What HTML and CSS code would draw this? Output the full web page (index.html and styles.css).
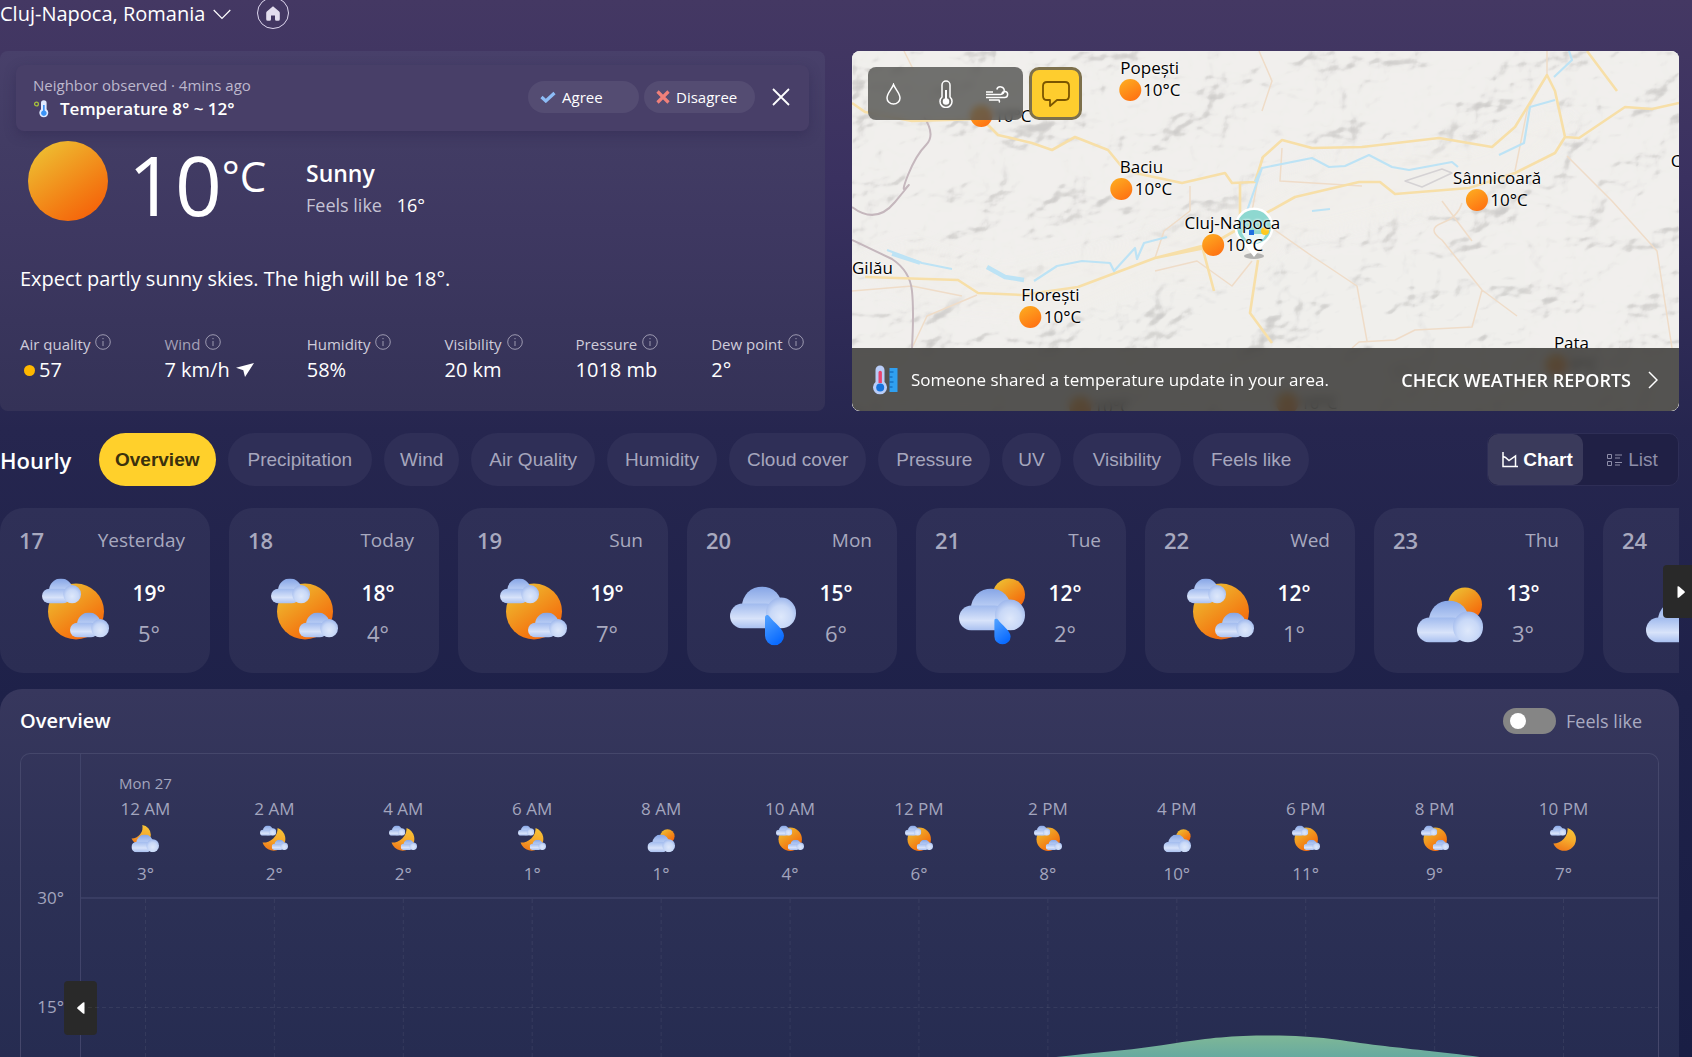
FILE: index.html
```html
<!DOCTYPE html>
<html lang="en">
<head>
<meta charset="utf-8">
<meta name="viewport" content="width=device-width, initial-scale=1">
<title>Weather in Cluj-Napoca, Romania</title>
<link rel="stylesheet" href="styles.css">
</head>
<body>
<svg class="sprite" aria-hidden="true">
  <defs>
    <linearGradient id="g-sun" x1="0.15" y1="0.1" x2="0.75" y2="0.95"><stop offset="0" stop-color="#eebb30"/><stop offset="0.7" stop-color="#f37e14"/><stop offset="1" stop-color="#f5650b"/></linearGradient>
    <linearGradient id="g-moon" x1="0.7" y1="0" x2="0.4" y2="1"><stop offset="0" stop-color="#f7c437"/><stop offset="0.5" stop-color="#f6ab2c"/><stop offset="1" stop-color="#f07a1a"/></linearGradient>
    <linearGradient id="g-top" x1="0" y1="0" x2="0" y2="1"><stop offset="0" stop-color="#86a5e6"/><stop offset="0.45" stop-color="#b9cdf4"/><stop offset="1" stop-color="#dbe5fa"/></linearGradient>
    <linearGradient id="g-left" x1="0" y1="0" x2="0" y2="1"><stop offset="0" stop-color="#a0baee"/><stop offset="0.6" stop-color="#d8e3fa"/><stop offset="1" stop-color="#a9c0f0"/></linearGradient>
    <radialGradient id="g-right" cx="0.5" cy="0.62" r="0.66"><stop offset="0" stop-color="#dee8fb"/><stop offset="0.55" stop-color="#c8d8f7"/><stop offset="1" stop-color="#96b1ea"/></radialGradient>
    <linearGradient id="g-drop" x1="0" y1="0" x2="0.5" y2="1"><stop offset="0" stop-color="#55a4ff"/><stop offset="1" stop-color="#0a6bff"/></linearGradient>
  </defs>
  <symbol id="cloud" viewBox="0 0 66 42">
    <circle cx="32" cy="20" r="20" fill="url(#g-top)"/>
    <rect x="0" y="17" width="48" height="25" rx="12.5" fill="url(#g-left)"/>
    <rect x="36" y="11" width="30" height="31" rx="15" fill="url(#g-right)"/>
  </symbol>
  <symbol id="drop" viewBox="0 0 20 32"><path d="M0 3 C0 -0.500 3 -0.500 4.500 1.500 C9 8 20 15 20 22 A10 10 0 0 1 0 22 Z" fill="url(#g-drop)"/></symbol>
  <symbol id="partly" viewBox="0 0 67 67">
    <circle cx="34" cy="34" r="28" fill="url(#g-sun)"/>
    <use href="#cloud" x="0" y="1" width="39" height="25"/><use href="#cloud" x="28" y="35" width="39" height="25"/>
  </symbol>
  <symbol id="rain" viewBox="0 0 67 67"><use href="#cloud" x="1" y="9" width="66" height="42"/><use href="#drop" x="36" y="37" width="19" height="31"/></symbol>
  <symbol id="sunrain" viewBox="0 0 67 67"><circle cx="51" cy="17" r="16" fill="url(#g-sun)"/><use href="#cloud" x="1" y="11" width="66" height="42"/><use href="#drop" x="36" y="41" width="17" height="26"/></symbol>
  <symbol id="cloudy" viewBox="0 0 67 67"><circle cx="49" cy="27" r="17" fill="url(#g-sun)"/><use href="#cloud" x="1" y="23" width="66" height="42"/></symbol>
  <symbol id="nightcloudy" viewBox="0 0 67 67"><path d="M27 0 A24 24 0 1 1 1 32 A26 26 0 0 0 27 0Z" fill="url(#g-moon)"/><use href="#cloud" x="1" y="23" width="66" height="42"/></symbol>
  <symbol id="night" viewBox="0 0 67 67"><path d="M42 7 A28 28 0 1 1 6 42 A34 34 0 0 0 42 7Z" fill="url(#g-moon)"/><use href="#cloud" x="0" y="1" width="39" height="25"/><use href="#cloud" x="28" y="35" width="39" height="25"/></symbol>
  <symbol id="nightclear" viewBox="0 0 67 67"><path d="M42 7 A28 28 0 1 1 8 44 A34 34 0 0 0 42 7Z" fill="url(#g-moon)"/><use href="#cloud" x="0" y="1" width="39" height="25"/></symbol>
  <symbol id="info" viewBox="0 0 16 16"><circle cx="8" cy="8" r="7.300" fill="none" stroke="currentColor"/><path d="M8 7v5M8 4v1.200" stroke="currentColor" fill="none"/></symbol>
</svg>

<main class="page">
  <header class="location">
    <button class="place" type="button">Cluj-Napoca, Romania
      <svg width="18" height="11" viewBox="0 0 18 11"><path d="M.7 1 9 9.500 17.300 1" fill="none" stroke="currentColor" stroke-width="1.200"/></svg>
    </button>
    <button class="home" type="button" aria-label="Set as home">
      <svg width="14" height="15" viewBox="0 0 14 15"><path d="M7 .3 13.200 5.600Q13.800 6.200 13.800 7V13.200Q13.800 14.700 12.300 14.700H10.400Q9 14.700 9 13.200V9.500H5V13.200Q5 14.700 3.600 14.700H1.700Q.2 14.700.2 13.200V7Q.2 6.200.8 5.600Z" fill="#e3deee"/></svg>
    </button>
  </header>

  <div class="top">
    <section class="current">
      <div class="notice">
        <div class="notice-text">
          <p class="muted">Neighbor observed · 4mins ago</p>
          <p class="observed"><svg width="17" height="18" viewBox="0 0 17 18"><circle cx="3.500" cy="4" r="1.900" fill="none" stroke="#a8c23c" stroke-width="1.300"/><path d="M8 3a2.800 2.800 0 0 1 5.600 0V9.300a4.500 4.500 0 1 1-5.600 0Z" fill="#dfeaff"/><path d="M10 5h1.700v5.500a2.800 2.800 0 1 1-1.700 0Z" fill="#3b93f5"/></svg>Temperature 8° ~ 12°</p>
        </div>
        <button class="vote" type="button"><svg width="16" height="12" viewBox="0 0 16 12"><path d="M1.500 6 5.800 10 14.500 2" fill="none" stroke="#8dbcf6" stroke-width="3.200"/></svg>Agree</button>
        <button class="vote" type="button"><svg width="14" height="14" viewBox="0 0 14 14"><path d="M1.500 1.500 12.500 12.500M12.500 1.500 1.500 12.500" fill="none" stroke="#f0807a" stroke-width="3.200"/></svg>Disagree</button>
        <button class="close" type="button" aria-label="Close"><svg width="18" height="18" viewBox="0 0 18 18"><path d="M1 1 17 17M17 1 1 17" fill="none" stroke="#fff" stroke-width="1.800"/></svg></button>
      </div>
      <div class="now">
        <svg class="sun" viewBox="0 0 80 80"><circle cx="40" cy="40" r="40" fill="url(#g-sun)"/></svg>
        <p class="degrees">10<span class="unit">°C</span></p>
        <div class="sky"><p class="sky-name">Sunny</p><p class="feels"><span>Feels like</span> 16°</p></div>
      </div>
      <p class="summary">Expect partly sunny skies. The high will be 18°.</p>
      <dl class="metrics">
        <div><dt>Air quality <svg><use href="#info"/></svg></dt><dd><i class="aqi-dot"></i>57</dd></div>
        <div><dt class="dim">Wind <svg><use href="#info"/></svg></dt><dd>7 km/h <svg class="wind-arrow" viewBox="0 0 18 14"><path d="M18 0 0 4.800 7.300 7.200 9 14Z" fill="#fff"/></svg></dd></div>
        <div><dt>Humidity <svg><use href="#info"/></svg></dt><dd>58%</dd></div>
        <div><dt>Visibility <svg><use href="#info"/></svg></dt><dd>20 km</dd></div>
        <div><dt>Pressure <svg><use href="#info"/></svg></dt><dd>1018 mb</dd></div>
        <div><dt>Dew point <svg><use href="#info"/></svg></dt><dd>2°</dd></div>
      </dl>
    </section>

    <section class="map" aria-label="Weather map">
      <svg class="terrain" viewBox="0 0 827 360" preserveAspectRatio="none" aria-hidden="true">
        <defs>
          <filter id="relief" x="0" y="0" width="1" height="1" color-interpolation-filters="sRGB">
            <feTurbulence type="fractalNoise" baseFrequency="0.014 0.018" numOctaves="4" seed="11"/>
            <feDiffuseLighting surfaceScale="18" diffuseConstant="1.100" lighting-color="#fff"><feDistantLight azimuth="225" elevation="62"/></feDiffuseLighting>
            <feComponentTransfer><feFuncR type="table" tableValues="0.700 0.710 0.730 0.800 0.910 0.945 0.950"/><feFuncG type="table" tableValues="0.700 0.710 0.725 0.795 0.907 0.942 0.946"/><feFuncB type="table" tableValues="0.700 0.705 0.720 0.785 0.900 0.930 0.935"/></feComponentTransfer>
            <feGaussianBlur stdDeviation="0.7"/>
          </filter>
          <filter id="soft"><feGaussianBlur stdDeviation="9"/></filter>
        </defs>
        <rect width="827" height="360" fill="#efeeeb"/>
        <rect width="827" height="360" filter="url(#relief)" opacity=".6"/>
        <path d="M0 215 60 195 150 225 230 205 290 190 380 155 480 105 620 95 700 60 725 75 640 145 540 165 430 190 400 225 300 230 220 265 60 250Z" fill="#f1efeb" opacity=".9" filter="url(#soft)"/>
        <g fill="none" stroke-linejoin="round">
          <g stroke="#efdcc8" stroke-width="1.500">
            <path d="M610 152Q606 166 590 172T590 189L630 239 665 265M630 239 620 276 563 279 543 289 507 291 500 297M410 170 460 205 505 235 515 290M663 120 675 60 695 24V0M338 135V160M303 207 312 180 338 160M400 210 380 235 345 210 303 220M0 240 60 235 110 245M60 297 75 265 125 244M410 60 420 30 407 0M410 106 400 160M430 97 428 130 510 135M590 150 620 190M715 105 760 150 805 200 820 297M52 0 62 20" />
            <path d="M553 130 590 118 600 122 570 136Z" stroke="#d5d2d4"/>
          </g>
          <g stroke="#c5b7bd" stroke-width="2">
            <path d="M72 66Q84 84 74 94T56 124 55 136 43 151 0 156M0 189 40 208Q58 220 60 240T60 297"/>
          </g>
          <g stroke="#f7dfa8" stroke-width="2.600">
            <path d="M0 52 13 61 60 70 130 68 146 84 180 92 200 99 223 86 256 99 270 116 283 122 330 132 373 122 380 132 403 131 411 106 430 89 460 97 510 96 587 87 640 96 663 76 695 24 703 40 713 86M388 132V165M13 226 106 229 126 242 170 244 226 236 303 207 353 197 400 170 443 146 507 131 528 131 543 143 617 137 663 122 703 102 713 86 727 87 773 56 800 58 827 52M406 209 398 262 420 292M303 207 350 195 362 240M735 0 765 40"/>
          </g>
          <g stroke="#bde3f5" stroke-width="2.200">
            <path d="M35 199 70 212 100 218M182 230 205 215 230 210 258 212 262 220 283 197 285 208 292 192 315 186M395 160 410 117 460 107 477 116 493 115 517 104 540 116 557 119 600 111 606 116M403 131 410 117M647 104 672 92 678 56 703 49M702 26 720 9 717 0M460 160 478 158"/>
            <path d="M135 216 153 226 172 229" stroke-width="4.500"/><path d="M40 203 68 212" stroke-width="3.500"/>
          </g>
        </g>
      </svg>

      <svg class="pin" viewBox="0 0 44 54"><ellipse cx="22" cy="50" rx="10" ry="3" fill="#777" opacity=".5"/><path d="M22 51 11 37A19.500 19.500 0 1 1 33 37Z" fill="#fff"/><circle cx="22" cy="21" r="17" fill="#8ed8d0"/><path d="M10 27q6-7 12 1h12q-4 9-12 10-8-2-12-11Z" fill="#e9f6f5"/><rect x="17" y="24" width="5" height="5" fill="#1e6fe0"/><circle cx="33" cy="25" r="4" fill="#ffc91f"/></svg>

      <div class="town popesti">Popești<span><i></i>10°C</span></div>
      <div class="town baciu">Baciu<span><i></i>10°C</span></div>
      <div class="town cluj">Cluj-Napoca<span><i></i>10°C</span></div>
      <div class="town floresti">Florești<span><i></i>10°C</span></div>
      <div class="town sannicoara">Sânnicoară<span><i></i>10°C</span></div>
      <div class="town pata">Pata<span><i></i>9°C</span></div>
      <div class="town gilau">Gilău</div>
      <div class="town east">C</div>
      <div class="town covered"><span><i></i>10°C</span></div>
      <div class="town south"><span><i></i>10°C</span></div>
      <div class="town southwest"><span><i></i>10°C</span></div>

      <div class="map-tools">
        <div class="layers">
          <button type="button" aria-label="Precipitation"><svg width="15" height="22" viewBox="0 0 15 22"><path d="M7.500 1.500C6 6 1 10 1 15a6.500 6 0 0 0 13 0C14 10 9 6 7.500 1.500Z"/></svg></button>
          <button type="button" aria-label="Temperature"><svg width="14" height="28" viewBox="0 0 14 28"><path d="M3 5a4 4 0 0 1 8 0V17a6 6 0 1 1-8 0Z"/><path d="M7 10v10" stroke-width="2"/><circle cx="7" cy="21.500" r="2.500" fill="#fff"/></svg></button>
          <button type="button" aria-label="Wind"><svg width="23" height="18" viewBox="0 0 23 18"><path d="M0 9.500H14.500A3.800 3.800 0 1 0 10.800 4.500M0 12.500H18.500A3 3 0 1 0 15.800 8.500M3 15H13A2 2 0 0 1 13 17.500" /><path d="M0 7H7"/></svg></button>
        </div>
        <button class="report" type="button" aria-label="Report weather"><svg width="28" height="26" viewBox="0 0 28 26"><path d="M5 1H23Q27 1 27 5V15Q27 19 23 19H15L8 25V19H5Q1 19 1 15V5Q1 1 5 1Z" fill="none" stroke="#7a5500" stroke-width="1.800" stroke-linejoin="round"/></svg></button>
      </div>

      <a class="banner" href="#reports">
        <svg width="25" height="30" viewBox="0 0 25 30"><path d="M2.500 5a4.500 4.500 0 0 1 9 0V17a7 7 0 1 1-9 0Z" fill="#b9cdf8"/><path d="M5.500 7.500a1.700 1.700 0 0 1 3.400 0V18H5.500Z" fill="#e8436e"/><circle cx="7.200" cy="22.500" r="4" fill="#1673dc"/><path d="M16.500 3H24.500V27H16.500Z" fill="#2f9ff0"/><path d="M16.500 7h4M16.500 12h3M16.500 17h4M16.500 22h3" stroke="#0b5cb0"/></svg>
        <span class="banner-text">Someone shared a temperature update in your area.</span>
        <strong>CHECK WEATHER REPORTS</strong>
        <svg width="10" height="18" viewBox="0 0 10 18"><path d="M1 1 9 9 1 17" fill="none" stroke="#fff" stroke-width="1.500"/></svg>
      </a>
    </section>
  </div>

  <nav class="tabs">
    <h2>Hourly</h2>
    <button class="tab narrow active" type="button">Overview</button>
    <button class="tab wide" type="button">Precipitation</button>
    <button class="tab narrow" type="button">Wind</button>
    <button class="tab" type="button">Air Quality</button>
    <button class="tab" type="button">Humidity</button>
    <button class="tab" type="button">Cloud cover</button>
    <button class="tab" type="button">Pressure</button>
    <button class="tab narrow" type="button">UV</button>
    <button class="tab wide" type="button">Visibility</button>
    <button class="tab" type="button">Feels like</button>
    <div class="view">
      <button class="selected" type="button"><svg width="16" height="16" viewBox="0 0 16 16"><path d="M1 0V14.500H16M1 4.500 3.500 5.500 7 8.500 13.500 4V14.500" fill="none" stroke="currentColor" stroke-width="1.500"/></svg>Chart</button>
      <button type="button"><svg width="16" height="14" viewBox="0 0 16 14"><path d="M.5 1.500H4.500V5.500H.5ZM.5 8.500H4.500V12.500H.5ZM8 2H15M8 5H13M8 9.500H15M8 12H13" fill="none" stroke="currentColor"/></svg>List</button>
    </div>
  </nav>

  <div class="days-wrap">
    <ol class="days">
      <li><p><b>17</b><span>Yesterday</span></p><div><svg><use href="#partly"/></svg><p><b>19°</b><span>5°</span></p></div></li>
      <li><p><b>18</b><span>Today</span></p><div><svg><use href="#partly"/></svg><p><b>18°</b><span>4°</span></p></div></li>
      <li><p><b>19</b><span>Sun</span></p><div><svg><use href="#partly"/></svg><p><b>19°</b><span>7°</span></p></div></li>
      <li><p><b>20</b><span>Mon</span></p><div><svg><use href="#rain"/></svg><p><b>15°</b><span>6°</span></p></div></li>
      <li><p><b>21</b><span>Tue</span></p><div><svg><use href="#sunrain"/></svg><p><b>12°</b><span>2°</span></p></div></li>
      <li><p><b>22</b><span>Wed</span></p><div><svg><use href="#partly"/></svg><p><b>12°</b><span>1°</span></p></div></li>
      <li><p><b>23</b><span>Thu</span></p><div><svg><use href="#cloudy"/></svg><p><b>13°</b><span>3°</span></p></div></li>
      <li><p><b>24</b></p><div><svg><use href="#cloudy"/></svg></div></li>
    </ol>
    <button class="scroll next" type="button" aria-label="Next days"><svg width="8" height="12" viewBox="0 0 8 12"><path d="M.5.5Q1 0 2 .6L7.500 5.200Q8.200 6 7.500 6.800L2 11.400Q1 12 .5 11.500Z" fill="#fff"/></svg></button>
  </div>

  <section class="panel">
    <div class="panel-head">
      <h3>Overview</h3>
      <label><input type="checkbox">Feels like</label>
    </div>
    <div class="chart">
      <div class="axis"><span>30°</span><span>15°</span></div>
      <button class="scroll prev" type="button" aria-label="Earlier hours"><svg width="8" height="12" viewBox="0 0 8 12"><path d="M7.500.5Q7 0 6 .6L.5 5.200Q-.2 6 .5 6.800L6 11.400Q7 12 7.500 11.500Z" fill="#fff"/></svg></button>
      <div class="series">
        <ol class="hours">
          <li><small>Mon 27</small><span>12 AM</span><svg><use href="#nightcloudy"/></svg><span>3°</span></li>
          <li><span>2 AM</span><svg><use href="#night"/></svg><span>2°</span></li>
          <li><span>4 AM</span><svg><use href="#night"/></svg><span>2°</span></li>
          <li><span>6 AM</span><svg><use href="#night"/></svg><span>1°</span></li>
          <li><span>8 AM</span><svg><use href="#cloudy"/></svg><span>1°</span></li>
          <li><span>10 AM</span><svg><use href="#partly"/></svg><span>4°</span></li>
          <li><span>12 PM</span><svg><use href="#partly"/></svg><span>6°</span></li>
          <li><span>2 PM</span><svg><use href="#partly"/></svg><span>8°</span></li>
          <li><span>4 PM</span><svg><use href="#cloudy"/></svg><span>10°</span></li>
          <li><span>6 PM</span><svg><use href="#partly"/></svg><span>11°</span></li>
          <li><span>8 PM</span><svg><use href="#partly"/></svg><span>9°</span></li>
          <li><span>10 PM</span><svg><use href="#nightclear"/></svg><span>7°</span></li>
        </ol>
        <div class="plot">
          <svg viewBox="0 0 1578 218" preserveAspectRatio="none" aria-hidden="true">
            <defs><linearGradient id="g-area" gradientUnits="userSpaceOnUse" x1="0" y1="134" x2="0" y2="218"><stop offset="0" stop-color="#81b996"/><stop offset="0.300" stop-color="#66a9a0"/><stop offset="1" stop-color="#4a86ad"/></linearGradient></defs>
            <g stroke="#fff" stroke-opacity=".07" stroke-dasharray="4 3"><path d="M0 108.500H1578M64.500 0V218M193.500 0V218M322.500 0V218M451.500 0V218M580.500 0V218M709.500 0V218M838.500 0V218M967.500 0V218M1096.500 0V218M1225.500 0V218M1354.500 0V218M1483.500 0V218" fill="none"/></g>
            <path d="M64 196C110 202 150 204 193 204S280 204 322 204 410 211 451 211 540 213 580 211 670 197 709 189 800 180 838 174 925 164 967 159 1055 151 1096 144C1130 139 1150 136.500 1190 136.500C1240 136.500 1262 142 1300 146.500C1345 152 1440 160 1483 174L1578 190V218H64Z" fill="url(#g-area)"/>
          </svg>
        </div>
      </div>
    </div>
  </section>
</main>
</body>
</html>
```
FILE: styles.css
```css
* { box-sizing: border-box; margin: 0; padding: 0; }

body {
  background: linear-gradient(#443863 0, #3a3160 180px, #26264f 430px, #1e2149 700px, #191e44 100%);
  color: #fff;
  font: 15px/24px "Open Sans", "Noto Sans", sans-serif;
}

button { border: 0; background: none; color: inherit; font: inherit; cursor: pointer; }
ol { list-style: none; }
.sprite { position: absolute; width: 0; height: 0; }

.page {
  display: flex;
  flex-direction: column;
  height: 100vh;
  padding-right: 13px;
  overflow: hidden;
}

/* Location bar */
.location { display: flex; align-items: center; gap: 26px; height: 32px; margin: -3px 0 22px; }
.place { display: flex; align-items: center; gap: 8px; padding-top: 2px; font-size: 20px; }
.home { display: grid; place-items: center; width: 32px; height: 32px; border: 1px solid #ddd6ee; border-radius: 50%; }

/* Current weather and map */
.top { display: grid; grid-template-columns: 825fr 827fr; gap: 27px; }

.current {
  display: flex;
  flex-direction: column;
  height: 360px;
  padding: 14px 16px 0;
  border-radius: 8px;
  background: linear-gradient(#48406a, #423c64 90px, #3e3861 180px, #343257);
}

.notice {
  display: flex;
  align-items: center;
  gap: 5px;
  padding: 8px 19px 10px 17px;
  border-radius: 8px;
  background: #483f68;
  box-shadow: 0 4px 12px #2a234b66;
}
.notice-text { flex: 1; }
.muted { color: #bdb8cd; }
.observed { display: flex; align-items: center; gap: 10px; font-size: 17px; font-weight: 600; }
.vote {
  display: flex;
  align-items: center;
  gap: 6px;
  width: 111px;
  height: 32px;
  padding-left: 12px;
  border-radius: 16px;
  background: #544c72;
}
.close { display: grid; place-items: center; margin-left: 12px; }

.now { display: flex; margin: 10px 0 0 12px; height: 80px; }
.sun { width: 80px; height: 80px; }
.degrees { display: flex; width: 198px; padding-left: 20px; font-size: 82px; line-height: 86px; }
.unit { font-size: 42px; line-height: 70px; }
.sky { padding-top: 16px; }
.sky-name { font-size: 23px; line-height: 32px; font-weight: 600; }
.feels { font-size: 18px; line-height: 32px; }
.feels span { margin-right: 10px; color: #c5c2d4; }

.summary { margin: 46px 0 0 4px; font-size: 20px; }

.metrics { display: flex; gap: 53px; margin: 41px 0 0 4px; }
.metrics dt { display: flex; gap: 5px; margin-bottom: 2px; color: #cfccda; white-space: nowrap; }
.metrics dt.dim { color: #a5a2b8; }
.metrics dt svg { width: 16px; height: 16px; margin-top: 2px; color: #9c99b0; }
.metrics dd { display: flex; align-items: center; font-size: 20px; white-space: nowrap; }
.aqi-dot { width: 11px; height: 11px; margin: 0 4px; border-radius: 50%; background: #ffb800; }
.wind-arrow { width: 18px; height: 14px; margin-left: 6px; }

.map { position: relative; height: 360px; overflow: hidden; border-radius: 8px; background: #efeeeb; }
.terrain { display: block; width: 100%; height: 100%; }

.town {
  position: absolute;
  display: flex;
  flex-direction: column;
  align-items: center;
  color: #000;
  font-size: 17px;
  line-height: 22px;
  white-space: nowrap;
  transform: translateX(-50%);
  text-shadow: 0 0 2px #fff, 0 0 3px #fff;
}
.town span { display: flex; align-items: center; gap: 2px; }
.town i { width: 22px; height: 22px; border-radius: 50%; background: linear-gradient(150deg, #fdb022, #ff6a10); }
.popesti { left: 36%; top: 6px; }
.baciu { left: 35%; top: 105px; }
.cluj { left: 46%; top: 161px; }
.floresti { left: 24%; top: 233px; }
.sannicoara { left: 78%; top: 116px; }
.pata { left: 87%; top: 281px; }
.gilau { left: 0; top: 206px; transform: none; }
.east { left: 99%; top: 99px; transform: none; }
.covered { left: 18%; top: 54px; }
.south { left: 55%; top: 341px; }
.southwest { left: 30%; top: 345px; }
.pin { position: absolute; left: 46%; top: 155px; width: 44px; height: 54px; }

.map-tools { position: absolute; left: 16px; top: 16px; display: flex; gap: 6px; }
.layers { display: flex; width: 155px; height: 53px; border-radius: 8px; background: #50504ecc; backdrop-filter: blur(3px); }
.layers button { display: grid; place-items: center; flex: 1; }
.layers svg { fill: none; stroke: #fff; stroke-width: 1.5; }
.report { display: grid; place-items: center; width: 53px; height: 53px; border: 3px solid #7d704c; border-radius: 10px; background: #fecd2e; }

.banner {
  position: absolute;
  inset: auto 0 0;
  display: flex;
  align-items: center;
  height: 63px;
  padding: 0 21px;
  background: #3c3b38dd;
  backdrop-filter: blur(4px);
  color: #fff;
  font-size: 17px;
  text-decoration: none;
}
.banner-text { flex: 1; margin-left: 13px; }
.banner strong { margin-right: 17px; font-size: 18px; font-weight: 600; }

/* Hourly tabs */
.tabs { display: flex; align-items: center; gap: 12px; margin-top: 22px; }
.tabs h2 { width: 87px; font-size: 22px; font-weight: 600; }
.tab {
  height: 53px;
  padding: 0 18px;
  border-radius: 27px;
  background: #2f2f57;
  color: #a6a6bd;
  font: 19px "Liberation Sans", Arial, sans-serif;
  white-space: nowrap;
}
.tab.narrow { padding: 0 16px; }
.tab.wide { padding: 0 20px; }
.tab.active { background: #ffd02b; color: #3b310d; font-weight: 700; }
.view { display: flex; margin-left: auto; border: 1px solid #2e2e56; border-radius: 10px; background: #202045; }
.view button {
  display: flex;
  align-items: center;
  justify-content: center;
  gap: 5px;
  width: 95px;
  height: 51px;
  padding-left: 4px;
  border-radius: 10px;
  color: #8e8ea9;
  font: 19px "Liberation Sans", Arial, sans-serif;
}
.view .selected { background: #3a3a5b; color: #fff; font-weight: 700; }

/* Daily cards */
.days-wrap { position: relative; margin-top: 22px; }
.days { display: flex; gap: 19px; overflow: hidden; }
.days li { flex: 0 0 210px; height: 165px; padding: 20px 25px 0 19px; border-radius: 24px; background: linear-gradient(#2f3057, #2b2d53); color: #a8a9bf; }
.days li > p { display: flex; justify-content: space-between; font-size: 19px; }
.days li > p b { font-size: 22px; font-weight: 600; }
.days li > div { display: flex; margin: 21px 0 0 23px; gap: 16px; }
.days div svg { width: 67px; height: 76px; }
.days div p { display: flex; flex-direction: column; width: 48px; align-items: center; font-size: 22px; line-height: 40px; }
.days div b { color: #fff; font-size: 21px; font-weight: 600; }
.scroll { position: absolute; display: grid; place-items: center; background: #292929; border-radius: 4px; }
.next { right: -13px; top: 57px; width: 29px; height: 53px; padding-left: 6px; border-radius: 4px 0 0 4px; }

/* Hourly chart */
.panel {
  display: flex;
  flex: 1;
  flex-direction: column;
  min-height: 0;
  margin-top: 16px;
  padding: 16px 20px 0;
  border-radius: 22px 22px 0 0;
  background: linear-gradient(#37375d, #2d3156 180px, #262c51);
}
.panel-head { display: flex; align-items: center; justify-content: space-between; height: 32px; margin-bottom: 16px; }
.panel-head h3 { font-size: 20px; font-weight: 600; }
.panel-head label { display: flex; align-items: center; gap: 10px; margin-right: 17px; color: #a9aac1; font-size: 18px; }
.panel-head input { display: flex; align-items: center; appearance: none; width: 53px; height: 26px; padding-left: 7px; border-radius: 13px; background: #858585; }
.panel-head input::before { content: ""; width: 16px; height: 16px; border-radius: 50%; background: #fff; }

.chart { position: relative; display: flex; flex: 1; min-height: 0; border: 1px solid #45476b; border-bottom: 0; border-radius: 10px 10px 0 0; color: #a3a5be; font-size: 17px; }
.axis { display: flex; flex-direction: column; gap: 85px; width: 60px; padding: 132px 16px 0 0; border-right: 1px solid #41446a; text-align: right; }
.prev { left: 43px; top: 227px; width: 33px; height: 54px; }
.series { display: flex; flex: 1; flex-direction: column; }
.hours { display: grid; grid-template-columns: repeat(12, 1fr); align-items: end; height: 145px; padding: 0 30px 11px 0; border-bottom: 2px solid #393d63; }
.hours li { display: flex; flex-direction: column; align-items: center; }
.hours small { margin-bottom: 2px; font-size: 15px; }
.hours svg { width: 28px; height: 28px; margin: 4px 0 9px; }
.plot { position: relative; flex: 1; overflow: hidden; }
.plot svg { position: absolute; top: 0; left: 0; width: 100%; height: 218px; }
```
